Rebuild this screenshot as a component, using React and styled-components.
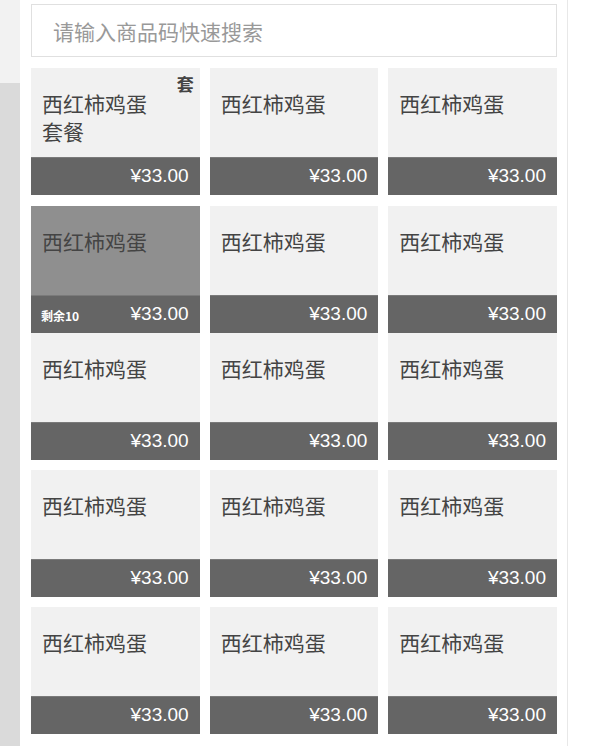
import React from "react";
import styled, { createGlobalStyle } from "styled-components";

const Global = createGlobalStyle`
  html, body { margin: 0; padding: 0; background: #fff; }
  body { font-family: "Liberation Sans", "Noto Sans CJK SC", sans-serif; }
  * { box-sizing: border-box; }
`;

const Page = styled.div`
  display: flex;
  width: 598px;
  height: 746px;
  overflow: hidden;
  background: #fff;
`;

const Sidebar = styled.div`
  width: 20px;
  display: flex;
  flex-direction: column;
  flex-shrink: 0;
`;

const SideTop = styled.div`
  height: 83px;
  background: #f2f2f2;
`;

const SideRest = styled.div`
  flex: 1;
  background: #dadada;
`;

const Panel = styled.div`
  width: 548px;
  flex-shrink: 0;
  padding: 4px 10px 0 11px;
  border-right: 1px solid #e8e8e8;
  background: #fff;
`;

const Search = styled.input`
  display: block;
  width: 526px;
  height: 53px;
  border: 1px solid #e0e0e0;
  padding: 0 0 0 21px;
  font-family: "Noto Sans CJK SC", sans-serif;
  font-size: 21px;
  color: #333;
  outline: none;
  background: #fff;
  &::placeholder { color: #999; }
`;

const Grid = styled.div`
  display: flex;
  flex-direction: column;
  margin-top: 11px;
`;

const Row = styled.div`
  display: grid;
  grid-template-columns: repeat(3, 1fr);
  column-gap: 10px;
  margin-top: ${(p) => p.$gap}px;
`;

const Card = styled.div`
  position: relative;
  height: 127px;
  display: flex;
  flex-direction: column;
  background: ${(p) => (p.$active ? "#8f8f8f" : "#f1f1f1")};
`;

const Name = styled.div`
  flex: 1;
  padding: 21px 35px 0 11px;
  font-family: "Noto Sans CJK SC", sans-serif;
  font-size: 21px;
  line-height: 28px;
  color: #444;
`;

const Badge = styled.span`
  position: absolute;
  top: 3px;
  right: 6px;
  font-family: "Noto Sans CJK SC", sans-serif;
  font-size: 17px;
  font-weight: 700;
  color: #444;
`;

const PriceBar = styled.div`
  height: 38px;
  flex-shrink: 0;
  display: flex;
  align-items: center;
  justify-content: space-between;
  padding: 0 11px 0 10px;
  background: #656565;
  border-top: 1px solid #7a7a7a;
  color: #fff;
`;

const Stock = styled.span`
  font-family: "Noto Sans CJK SC", sans-serif;
  font-size: 12px;
  font-weight: 700;
  margin-top: 1px;
`;

const Price = styled.span`
  margin-left: auto;
  font-family: "Liberation Sans", Arial, sans-serif;
  font-size: 19px;
  margin-top: -2px;
`;

const rows = [
  { gap: 0, items: [{ name: "西红柿鸡蛋套餐", badge: "套" }, { name: "西红柿鸡蛋" }, { name: "西红柿鸡蛋" }] },
  { gap: 11, items: [{ name: "西红柿鸡蛋", active: true, stock: "剩余10" }, { name: "西红柿鸡蛋" }, { name: "西红柿鸡蛋" }] },
  { gap: 0, items: [{ name: "西红柿鸡蛋" }, { name: "西红柿鸡蛋" }, { name: "西红柿鸡蛋" }] },
  { gap: 10, items: [{ name: "西红柿鸡蛋" }, { name: "西红柿鸡蛋" }, { name: "西红柿鸡蛋" }] },
  { gap: 10, items: [{ name: "西红柿鸡蛋" }, { name: "西红柿鸡蛋" }, { name: "西红柿鸡蛋" }] },
];

export default function App() {
  return (
    <Page>
      <Global />
      <Sidebar>
        <SideTop />
        <SideRest />
      </Sidebar>
      <Panel>
        <Search placeholder="请输入商品码快速搜索" />
        <Grid>
          {rows.map((row, ri) => (
            <Row key={ri} $gap={row.gap}>
              {row.items.map((it, ci) => (
                <Card key={ci} $active={it.active}>
                  {it.badge && <Badge>{it.badge}</Badge>}
                  <Name>{it.name}</Name>
                  <PriceBar>
                    {it.stock && <Stock>{it.stock}</Stock>}
                    <Price>¥33.00</Price>
                  </PriceBar>
                </Card>
              ))}
            </Row>
          ))}
        </Grid>
      </Panel>
    </Page>
  );
}
